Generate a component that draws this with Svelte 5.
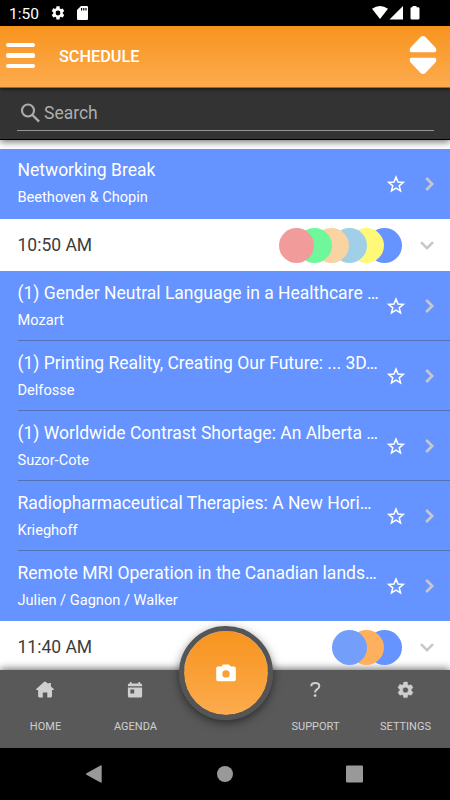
<script lang="ts">
    type Session = { title: string; room: string };
    type Slot = { time?: string; tracks: string[]; sessions: Session[] };

    const slots: Slot[] = [
        {
            tracks: [],
            sessions: [{ title: "Networking Break", room: "Beethoven & Chopin" }],
        },
        {
            time: "10:50 AM",
            tracks: ["#f29b9b", "#6ff89b", "#f9d3a2", "#a0cfe8", "#fff977", "#6593ff"],
            sessions: [
                { title: "(1) Gender Neutral Language in a Healthcare …", room: "Mozart" },
                { title: "(1) Printing Reality, Creating Our Future: ... 3D…", room: "Delfosse" },
                { title: "(1) Worldwide Contrast Shortage: An Alberta …", room: "Suzor-Cote" },
                { title: "Radiopharmaceutical Therapies: A New Hori…", room: "Krieghoff" },
                { title: "Remote MRI Operation in the Canadian lands…", room: "Julien / Gagnon / Walker" },
            ],
        },
        {
            time: "11:40 AM",
            tracks: ["#739ffa", "#ffb05c", "#6593ff"],
            sessions: [],
        },
    ];

    const gear =
        "M19.14 12.94c.04-.3.06-.61.06-.94 0-.32-.02-.64-.07-.94l2.03-1.58a.49.49 0 0 0 .12-.61l-1.92-3.32a.49.49 0 0 0-.59-.22l-2.39.96c-.5-.38-1.03-.7-1.62-.94l-.36-2.54A.48.48 0 0 0 13.92 2h-3.84a.48.48 0 0 0-.48.41l-.36 2.54c-.59.24-1.13.57-1.62.94l-2.39-.96a.48.48 0 0 0-.59.22L2.74 8.87a.47.47 0 0 0 .12.61l2.03 1.58c-.05.3-.09.63-.09.94s.02.64.07.94l-2.03 1.58a.49.49 0 0 0-.12.61l1.92 3.32c.12.22.37.29.59.22l2.39-.96c.5.38 1.03.7 1.62.94l.36 2.54c.05.24.24.41.48.41h3.84c.24 0 .44-.17.47-.41l.36-2.54c.59-.24 1.13-.56 1.62-.94l2.39.96c.22.08.47 0 .59-.22l1.92-3.32a.48.48 0 0 0-.12-.61l-2.01-1.58zM12 15.6a3.6 3.6 0 1 1 0-7.2 3.6 3.6 0 0 1 0 7.2z";
</script>

<div class="screen">
    <div class="status">
        <span class="clock">1:50</span>
        <svg class="status-gear" width="16" height="16" viewBox="0 0 24 24"><path d={gear} /></svg>
        <svg width="11" height="14" viewBox="0 0 11 14">
            <path d="M4 0h6a1 1 0 0 1 1 1v12a1 1 0 0 1-1 1H1a1 1 0 0 1-1-1V4zM4 2v2.6h1.2V2zM6.2 2v2.6h1.2V2zM8.4 2v2.6h1.2V2z" fill-rule="evenodd" />
        </svg>
        <svg class="signals" width="50" height="16" viewBox="0 0 50 16">
            <path d="M2 3.8Q10 -1.8 18 3.8L10 14z" />
            <path d="M33 1v13.5H19.5z" />
            <path d="M42.500 1h4v1.200h1.700a1.300 1.300 0 0 1 1.300 1.300v9.800a1.300 1.300 0 0 1-1.300 1.300h-6.400a1.300 1.300 0 0 1-1.300-1.300V3.500a1.300 1.300 0 0 1 1.300-1.300h.7z" />
        </svg>
    </div>

    <header>
        <button class="menu" aria-label="Menu">
            <i></i><i></i><i></i>
        </button>
        <h1>SCHEDULE</h1>
        <svg class="sort" width="28" height="40" viewBox="0 0 28 40">
            <path d="M11.8 1.800Q14 .2 16.200 1.800L26.800 13Q28.500 17.300 25 17.300H3Q-.5 17.300 1.200 13z" />
            <path d="M11.800 38.200Q14 39.800 16.200 38.200L26.800 27Q28.500 22.700 25 22.700H3Q-.5 22.700 1.200 27z" />
        </svg>
    </header>

    <div class="search">
        <div class="field">
            <svg width="20" height="20" viewBox="0 0 20 20" fill="none" stroke="#adadad">
                <circle cx="7" cy="7.500" r="6" stroke-width="2.100" />
                <path d="M11.500 12l6.600 6.600" stroke-width="2.400" />
            </svg>
            <span>Search</span>
        </div>
    </div>

    <main>
        {#each slots as slot}
            {#if slot.time}
                <div class="time">
                    <h2>{slot.time}</h2>
                    <div class="tracks">
                        {#each slot.tracks as color, i}
                            <i style="background: {color}; z-index: {slot.tracks.length - i}"></i>
                        {/each}
                    </div>
                    <svg class="down" width="14" height="9" viewBox="0 0 14 9">
                        <path d="M1 1.2l6 6 6-6" />
                    </svg>
                </div>
            {/if}
            {#each slot.sessions as session}
                <div class="session">
                    <div class="body">
                        <div class="text">
                            <h3>{session.title}</h3>
                            <p>{session.room}</p>
                        </div>
                        <svg class="star" width="18" height="18" viewBox="0 0 18 18">
                            <path d="M9 2.1l2 4.9 5.3.4-4.1 3.4 1.3 5.1L9 13.1l-4.5 2.8 1.3-5.1-4.1-3.4L7 7z" />
                        </svg>
                        <svg class="next" width="9" height="14" viewBox="0 0 9 14">
                            <path d="M1.2 1l6 6-6 6" />
                        </svg>
                    </div>
                </div>
            {/each}
        {/each}
    </main>

    <nav>
        <button>
            <svg width="20" height="20" viewBox="0 0 20 20">
                <path d="M10 1.6q.5 0 1 .4l2.4 2.1V3h2.5v3.4l2.9 2.6q.5.8-.4 1H17v6.3q0 1.1-1.1 1.1h-3.6v-5H7.8v5H4.2q-1.1 0-1.1-1.1V10H1.6q-.9-.2-.4-1L9 2q.5-.4 1-.4z" />
            </svg>
            <span>HOME</span>
        </button>
        <button>
            <svg width="20" height="20" viewBox="0 0 20 20">
                <path d="M5 2h1.6v1.6h6.8V2H15v1.6h.7q1.4 0 1.4 1.4v1.3H2.9V5q0-1.4 1.4-1.4H5zM2.9 7.4h14.2v8.7q0 1.5-1.5 1.5H4.4q-1.5 0-1.5-1.5zM5.4 9.4v4h3.8v-4z" fill-rule="evenodd" />
            </svg>
            <span>AGENDA</span>
        </button>
        <div class="gap"></div>
        <button>
            <svg width="20" height="20" viewBox="0 0 20 20">
                <path d="M6.3 6.3q0-3.2 4-3.2 4 0 4 3.2 0 1.7-2.3 3.1-1.9 1.2-1.9 3.1" fill="none" stroke="#cfcfcf" stroke-width="2" />
                <circle cx="10.1" cy="15.6" r="1.4" />
            </svg>
            <span>SUPPORT</span>
        </button>
        <button>
            <svg width="19" height="20" viewBox="0 0 24 24"><path d={gear} stroke="#cfcfcf" stroke-width=".6" /></svg>
            <span>SETTINGS</span>
        </button>
        <button class="camera" aria-label="Camera">
            <svg width="20" height="18" viewBox="0 0 20 18">
                <path d="M7 .5h6l1.7 2H18q1.8 0 1.8 1.8v11.2q0 1.8-1.8 1.8H2q-1.8 0-1.8-1.8V4.3Q.2 2.5 2 2.5h3.3zM10 6.2a3.7 3.7 0 1 0 0 7.4 3.7 3.7 0 0 0 0-7.4z" fill-rule="evenodd" />
            </svg>
        </button>
    </nav>

    <div class="system">
        <svg width="260" height="20" viewBox="0 0 260 20">
            <path d="M-8.5 9.2q-1 .8 0 1.6L5.5 18.5q1.2.5 1.2-.7V2.2q0-1.2-1.2-.7z" />
            <circle cx="130" cy="10" r="8" />
            <rect x="251" y="1.5" width="17" height="17" rx="1" />
        </svg>
    </div>
</div>

<style>
    :global(body) {
        font-family: Roboto, sans-serif;
        background: #000;
    }

    .screen {
        display: flex;
        flex-direction: column;
        width: 450px;
        height: 800px;
        overflow: hidden;
        background: #fff;
    }

    h1,
    h2,
    h3,
    p {
        margin: 0;
        font-weight: 400;
    }

    button {
        padding: 0;
        border: 0;
        background: none;
        font-family: inherit;
    }

    svg {
        display: block;
        flex: none;
        overflow: visible;
    }

    .status {
        display: flex;
        align-items: center;
        flex: none;
        height: 26px;
        box-sizing: border-box;
        padding: 0 30px 0 9px;
        background: #000;
        color: #fff;
        fill: #fff;
    }

    .clock {
        width: 41px;
        font-size: 15.5px;
        line-height: 26px;
        padding-top: 2px;
    }

    .status-gear {
        margin-right: 11px;
    }

    .signals {
        margin-left: auto;
    }

    header {
        display: flex;
        align-items: center;
        flex: none;
        height: 62px;
        box-sizing: border-box;
        padding: 0 13px 0 6px;
        background: linear-gradient(#f7941e, #fdab4e);
        border-bottom: 1px solid #a96b22;
        color: #fff;
        position: relative;
        z-index: 1;
        box-shadow: 0 1px 4px rgba(0, 0, 0, 0.6);
    }

    .menu {
        display: flex;
        flex-direction: column;
        gap: 6px;
        width: 53px;
        margin-top: -2px;
    }

    .menu i {
        width: 29px;
        height: 4.5px;
        border-radius: 2px;
        background: #fff;
    }

    h1 {
        flex: 1;
        font-size: 16.25px;
        font-weight: 500;
    }

    .sort {
        fill: #fff;
        margin-top: -3px;
    }

    .search {
        flex: none;
        height: 52px;
        box-sizing: border-box;
        padding: 8px 16px 0 17px;
        background: #333;
        border-bottom: 1px solid #000;
        box-shadow: 0 2px 7px rgba(0, 0, 0, 0.55);
        position: relative;
    }

    .field {
        display: flex;
        align-items: center;
        gap: 3px;
        height: 34px;
        padding-left: 4px;
        border-bottom: 1px solid #949494;
        color: #adadad;
        font-size: 17.5px;
    }

    main {
        flex: 1;
        min-height: 0;
        overflow: hidden;
        padding-top: 9px;
    }

    .time {
        display: flex;
        align-items: center;
        height: 52px;
        padding: 0 16px 0 17.5px;
        background: #fff;
    }

    h2 {
        flex: 1;
        font-size: 17.5px;
        color: #3c3c3c;
    }

    .tracks {
        display: flex;
    }

    .tracks i {
        width: 35px;
        height: 35px;
        border-radius: 50%;
    }

    .tracks i + i {
        margin-left: -17.5px;
    }

    .down,
    .next {
        fill: none;
        stroke: #c8c8cc;
        stroke-width: 2.6;
    }

    .down {
        margin-left: 18.5px;
    }

    .session {
        padding-left: 17.5px;
        background: #6593ff;
        color: #fff;
    }

    .body {
        display: flex;
        align-items: center;
        height: 70px;
        box-sizing: border-box;
        padding-right: 16px;
        border-bottom: 1px solid #5473b7;
    }

    .session:not(:has(+ .session)) .body {
        border-bottom-color: transparent;
    }

    .text {
        flex: 1;
        min-width: 0;
        white-space: nowrap;
    }

    .session:first-child .text {
        padding-bottom: 2px;
    }

    h3 {
        padding-top: 1px;
        font-size: 17.5px;
        line-height: 24px;
    }

    p {
        margin-top: 4px;
        font-size: 14.6px;
        line-height: 22px;
    }

    .star {
        margin-right: 20px;
        fill: none;
        stroke: #fff;
        stroke-width: 1.5;
    }

    nav {
        display: grid;
        grid-template-columns: repeat(5, 1fr);
        flex: none;
        height: 78px;
        position: relative;
        background: #595959;
        box-shadow: 0 -1px 8px rgba(0, 0, 0, 0.6);
    }

    nav button:not(.camera) {
        display: flex;
        flex-direction: column;
        align-items: center;
        gap: 20px;
        padding-top: 10px;
        color: #cfcfcf;
        fill: #cfcfcf;
        font-size: 11px;
        line-height: 14px;
    }

    nav span {
        padding-left: 1px;
    }

    .camera {
        position: absolute;
        left: 178.5px;
        top: -44px;
        display: flex;
        align-items: center;
        justify-content: center;
        width: 94px;
        height: 94px;
        border: 5px solid #555;
        border-radius: 50%;
        background: linear-gradient(#f7941e, #fdab4e) padding-box;
        box-shadow: 0 3px 10px rgba(0, 0, 0, 0.5);
        fill: #fff;
    }

    .system {
        display: flex;
        justify-content: center;
        align-items: center;
        flex: none;
        height: 52px;
        background: #000;
        fill: #999;
    }
</style>
